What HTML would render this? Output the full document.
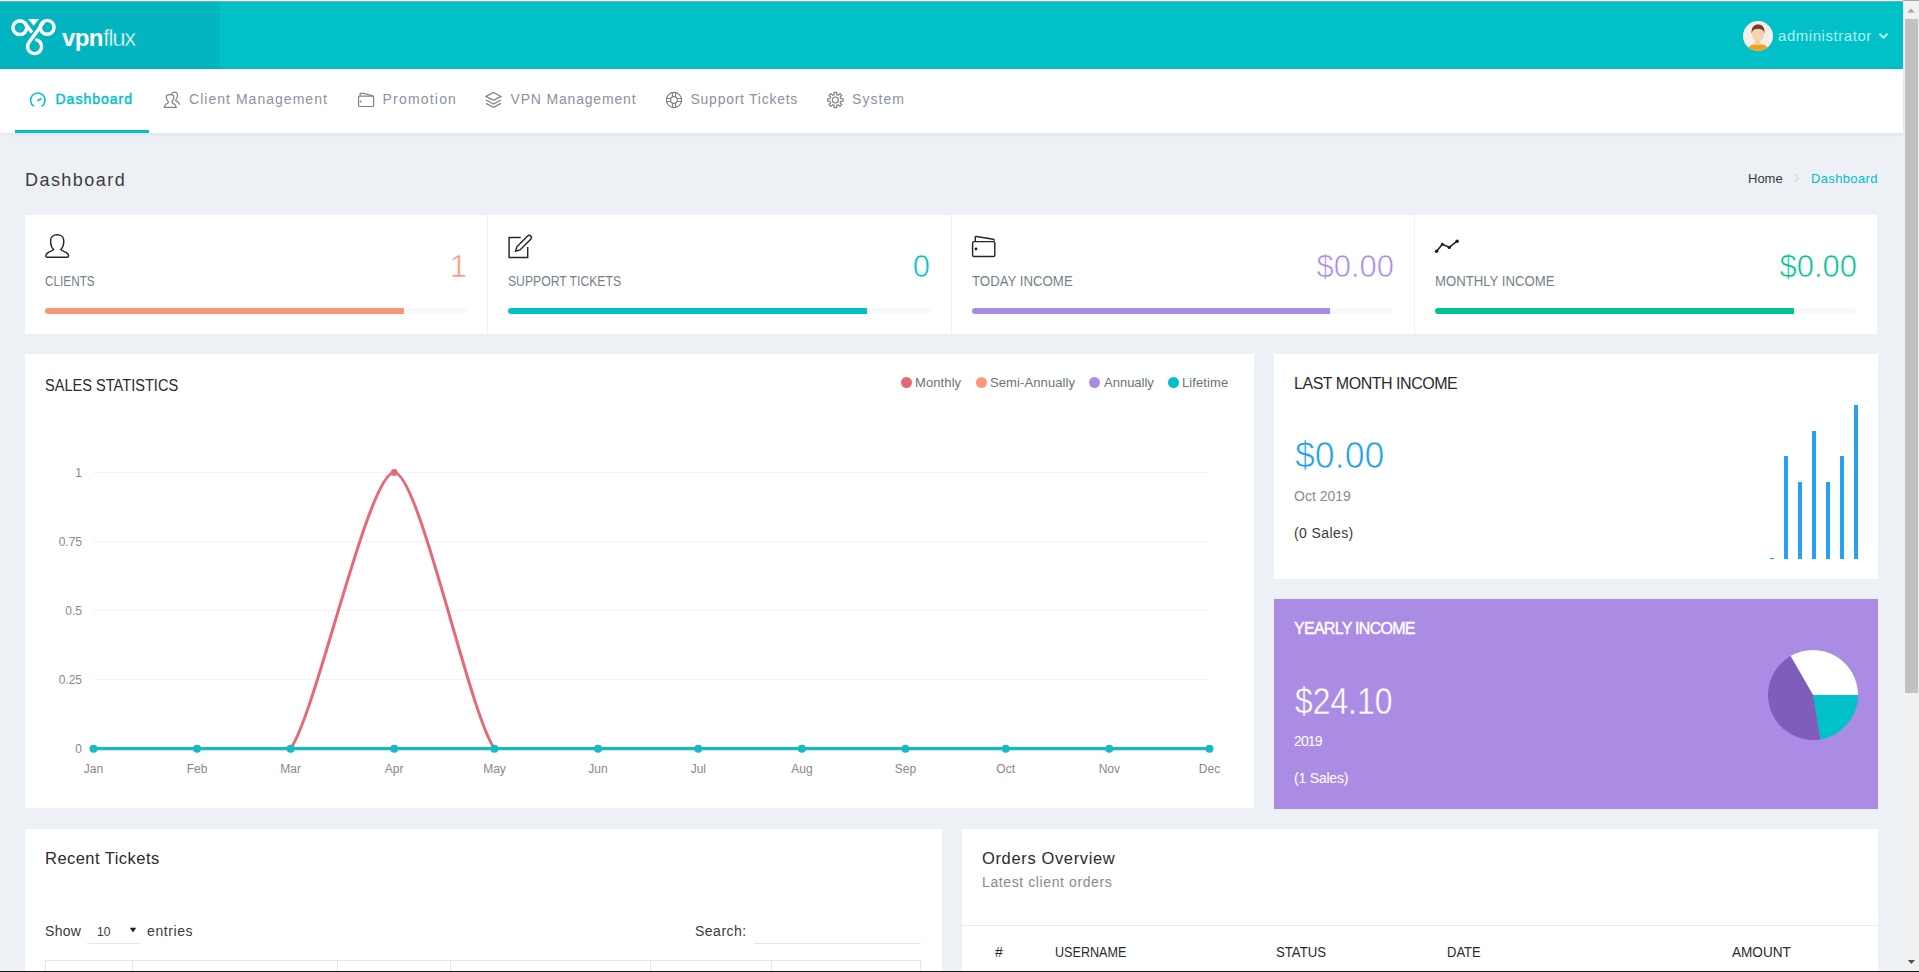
<!DOCTYPE html>
<html><head><meta charset="utf-8">
<style>
*{box-sizing:border-box}
html,body{margin:0;padding:0}
body{width:1919px;height:972px;overflow:hidden;background:#edf1f5;font-family:"Liberation Sans",sans-serif;position:relative;color:#313131}
.a{position:absolute}
.t{position:absolute;white-space:nowrap;line-height:1}
svg{position:absolute;overflow:visible}
</style></head><body>
<!-- top frame line -->
<div class="a" style="left:0;top:0;width:1919px;height:1px;background:#efefef"></div>
<!-- header -->
<div class="a" style="left:0;top:1px;width:1903px;height:68px;background:#01c0c8"></div>
<div class="a" style="left:0;top:1px;width:220px;height:68px;background:#02b5c0"></div>
<div class="a" style="left:0;top:1px;width:1903px;height:1px;background:#6aaeb0"></div>
<!-- logo -->
<svg style="left:0;top:0" width="60" height="60" viewBox="0 0 60 60">
 <g fill="none" stroke="#fff" stroke-width="3.4">
  <circle cx="19.8" cy="27.6" r="6.9"/>
  <circle cx="47.2" cy="27.3" r="6.9"/>
  <path d="M24.6 22.6 L32 32.6"/>
  <path d="M43.6 22.3 L29.1 42.2 A7 7 0 1 0 35.4 39.6"/>
 </g>
 <polygon points="28.2,18.9 39.1,18.9 33.6,25.8" fill="#fff"/>
</svg>
<div class="t" style="left:62px;top:26px;font-size:24px;font-weight:700;color:#fff;letter-spacing:-0.6px">vpn</div>
<div class="t" style="left:103px;top:26px;font-size:24px;color:#fff;-webkit-text-stroke:0.55px #02b5c0;letter-spacing:-1.4px">flux</div>
<!-- avatar -->
<svg style="left:1743px;top:21px" width="30" height="30" viewBox="0 0 30 30">
 <defs><clipPath id="av"><circle cx="15" cy="15" r="15"/></clipPath></defs>
 <g clip-path="url(#av)">
  <rect width="30" height="30" fill="#f4efe9"/>
  <path d="M4 30 C5 24 10 23 15 23 C20 23 25 24 26 30Z" fill="#f0a11e"/>
  <rect x="12.5" y="18" width="5" height="6" fill="#f3c9a0"/>
  <ellipse cx="15" cy="13.5" rx="6" ry="7" fill="#f6d2ad"/>
  <path d="M8.6 13 C8 6 11 3.5 15 3.5 C19.5 3.5 22 6 21.4 13 C20.8 9 19 8 15 8 C11 8 9.5 9 8.6 13Z" fill="#7a3b2a"/>
 </g>
</svg>
<div class="t" style="left:1778px;top:28px;font-size:15px;color:#b3f1f4;letter-spacing:0.55px">administrator</div>
<svg style="left:1878px;top:32px" width="11" height="8" viewBox="0 0 11 8"><path d="M1.5 1.8 L5.5 5.8 L9.5 1.8" fill="none" stroke="#b3f1f4" stroke-width="2.2"/></svg>

<!-- nav -->
<div class="a" style="left:0;top:69px;width:1903px;height:64px;background:#fff;box-shadow:0 1px 5px rgba(0,0,0,0.07)"></div>
<div class="a" style="left:15px;top:130px;width:134px;height:3px;background:#01c0c8"></div>
<!-- nav icons -->
<svg style="left:0;top:0" width="900" height="140" viewBox="0 0 900 140">
 <g fill="none" stroke="#01c0c8" stroke-width="1.5">
  <path d="M34.04 106.46 A7.3 7.3 0 1 1 41.56 106.46"/>
  <path d="M37.3 100.8 L41.6 98.4" stroke-width="1.7"/>
 </g>
 <g fill="none" stroke="#7d828c" stroke-width="1.2">
  <path d="M171 94.6 C171.8 93 173 92.2 174.4 92.2 C176.2 92.2 177.5 93.6 177.5 95.6 C177.5 97 177.2 98.5 175.8 99.8 V100.8 C177.3 101.8 179.6 102.6 179.7 104.8"/>
  <path fill="#fff" d="M164.3 107.3 H176.2 C176.2 104.6 173.6 103.6 172 102.8 V101.4 C173.4 100.1 173.9 98.4 173.9 97.3 C173.9 95.3 172.3 94.6 170.1 94.6 C167.9 94.6 166.3 95.3 166.3 97.3 C166.3 98.4 166.8 100.1 168.2 101.4 V102.8 C166.6 103.6 164.3 104.6 164.3 107.3Z"/>
  <rect x="358.6" y="96.2" width="15" height="10.3" rx="0.8"/>
  <path d="M360.2 96 V93.4 H363.3 C365.5 93.4 366 94.3 368 94.5 L373 95.8"/>
  <path d="M486 96.4 L493.5 92.4 L501 96.4 L493.5 100.4Z"/>
  <path d="M486 100 L493.5 104 L501 100"/>
  <path d="M486 103.4 L493.5 107.4 L501 103.4"/>
  <circle cx="674" cy="100" r="7.6"/>
  <circle cx="674" cy="100" r="3.4"/>
  <path d="M672.5 92.4 V96.8 M675.5 92.4 V96.8 M672.5 103.2 V107.6 M675.5 103.2 V107.6 M666.4 98.5 H670.8 M666.4 101.5 H670.8 M677.2 98.5 H681.6 M677.2 101.5 H681.6"/>
  <circle cx="835.4" cy="100" r="3"/>
 </g>
 <circle cx="360.8" cy="101.5" r="0.9" fill="#7d828c"/>
 <path id="gear" fill="none" stroke="#7d828c" stroke-width="1.2" d="M834.05 94.57 L834.12 92.31 L836.68 92.31 L836.75 94.57 L838.29 95.20 L839.94 93.65 L841.75 95.46 L840.20 97.11 L840.83 98.65 L843.09 98.72 L843.09 101.28 L840.83 101.35 L840.20 102.89 L841.75 104.54 L839.94 106.35 L838.29 104.80 L836.75 105.43 L836.68 107.69 L834.12 107.69 L834.05 105.43 L832.51 104.80 L830.86 106.35 L829.05 104.54 L830.60 102.89 L829.97 101.35 L827.71 101.28 L827.71 98.72 L829.97 98.65 L830.60 97.11 L829.05 95.46 L830.86 93.65 L832.51 95.20Z"/>
</svg>
<div class="t" style="left:55.5px;top:92px;font-size:14px;color:#01c0c8;-webkit-text-stroke:0.45px #01c0c8;letter-spacing:1.0px">Dashboard</div>
<div class="t" style="left:189px;top:92px;font-size:14px;color:#8b92a0;letter-spacing:1.03px">Client Management</div>
<div class="t" style="left:382.5px;top:92px;font-size:14px;color:#8b92a0;letter-spacing:1.2px">Promotion</div>
<div class="t" style="left:510.5px;top:92px;font-size:14px;color:#8b92a0;letter-spacing:0.82px">VPN Management</div>
<div class="t" style="left:690.5px;top:92px;font-size:14px;color:#8b92a0;letter-spacing:0.74px">Support Tickets</div>
<div class="t" style="left:852px;top:92px;font-size:14px;color:#8b92a0;letter-spacing:1.05px">System</div>

<!-- page title -->
<div class="t" style="left:25px;top:171px;font-size:18px;color:#3c3c3c;letter-spacing:1.45px">Dashboard</div>
<div class="t" style="left:1748px;top:172px;font-size:13px;color:#3a3a3a">Home</div>
<svg style="left:1793px;top:173px" width="8" height="10" viewBox="0 0 8 10"><path d="M1.5 1 L5.5 5 L1.5 9" fill="none" stroke="#c9ced6" stroke-width="1"/></svg>
<div class="t" style="left:1811px;top:172px;font-size:13px;color:#01c0c8;letter-spacing:0.35px">Dashboard</div>

<!-- stat cards -->
<div class="a" style="left:25px;top:215px;width:1852px;height:119px;background:#fff"></div>
<div class="a" style="left:487px;top:215px;width:1px;height:119px;background:#eef1f4"></div>
<div class="a" style="left:951px;top:215px;width:1px;height:119px;background:#eef1f4"></div>
<div class="a" style="left:1414px;top:215px;width:1px;height:119px;background:#eef1f4"></div>
<svg style="left:0;top:0" width="1500" height="300" viewBox="0 0 1500 300">
 <g fill="none" stroke="#262626" stroke-width="1.45">
  <path d="M53.6 249.6 C51.6 247.6 50.6 244.5 50.6 241 C50.6 237 53.5 234.8 57.2 234.8 C60.9 234.8 63.8 237 63.8 241 C63.8 244.5 62.8 247.6 60.8 249.6 C61.5 250.6 63.5 251.3 66.2 252.5 C68.2 253.4 68.6 254.6 68.6 256 C68.6 257 68 257.3 67 257.3 H47.4 C46.4 257.3 45.8 257 45.8 256 C45.8 254.6 46.2 253.4 48.2 252.5 C50.9 251.3 52.9 250.6 53.6 249.6Z"/>
  <path d="M520.7 237.4 H509.1 V257.4 H527.7 V247"/>
  <path d="M515.6 251.2 L516.87 246.81 L527.64 236.04 A2.2 2.2 0 0 1 530.76 239.16 L519.99 249.93 Z"/>
  <rect x="972.6" y="241.6" width="22.2" height="14.9" rx="1.3"/>
  <path d="M975.3 241.6 V237.6 Q975.3 236.3 976.6 236.5 L993.2 239.3 Q994.4 239.6 994.4 240.8"/>
 </g>
 <circle cx="976" cy="249" r="1.4" fill="#1f1f1f"/>
 <g fill="none" stroke="#1f1f1f" stroke-width="1.5">
  <path d="M1436.6 251.3 L1442.4 244.25 L1449.3 247.4 L1457.1 241.2"/>
 </g>
 <g fill="#1f1f1f">
  <circle cx="1436.6" cy="251.3" r="1.8"/><circle cx="1442.4" cy="244.25" r="1.5"/><circle cx="1449.3" cy="247.4" r="1.7"/><circle cx="1457.1" cy="241.2" r="1.8"/>
 </g>
</svg>
<div class="t" style="left:45px;top:274px;font-size:14px;color:#757f89;transform-origin:0 0;transform:scaleX(0.84)">CLIENTS</div>
<div class="t" style="left:508px;top:274px;font-size:14px;color:#757f89;transform-origin:0 0;transform:scaleX(0.87)">SUPPORT TICKETS</div>
<div class="t" style="left:972px;top:274px;font-size:14px;color:#757f89;transform-origin:0 0;transform:scaleX(0.945)">TODAY INCOME</div>
<div class="t" style="left:1435px;top:274px;font-size:14px;color:#757f89;transform-origin:0 0;transform:scaleX(0.94)">MONTHLY INCOME</div>
<div class="t" style="left:387px;top:251.3px;width:80px;text-align:right;font-size:31px;color:#fb9678;-webkit-text-stroke:0.6px #fff">1</div>
<div class="t" style="left:850px;top:251.3px;width:80px;text-align:right;font-size:31px;color:#01c0c8;-webkit-text-stroke:0.6px #fff">0</div>
<div class="t" style="left:1234px;top:251.3px;width:160px;text-align:right;font-size:31px;color:#ab8ce4;-webkit-text-stroke:0.6px #fff">$0.00</div>
<div class="t" style="left:1697px;top:251.3px;width:160px;text-align:right;font-size:31px;color:#00c292;-webkit-text-stroke:0.6px #fff">$0.00</div>
<div class="a" style="left:45px;top:308px;width:421px;height:6px;background:#f6f8fa;border-radius:3px"></div>
<div class="a" style="left:45px;top:308px;width:359px;height:6px;background:#fb9678;border-radius:3px 0 0 3px"></div>
<div class="a" style="left:508px;top:308px;width:422px;height:6px;background:#f6f8fa;border-radius:3px"></div>
<div class="a" style="left:508px;top:308px;width:359px;height:6px;background:#01c0c8;border-radius:3px 0 0 3px"></div>
<div class="a" style="left:972px;top:308px;width:421px;height:6px;background:#f6f8fa;border-radius:3px"></div>
<div class="a" style="left:972px;top:308px;width:358px;height:6px;background:#ab8ce4;border-radius:3px 0 0 3px"></div>
<div class="a" style="left:1435px;top:308px;width:421px;height:6px;background:#f6f8fa;border-radius:3px"></div>
<div class="a" style="left:1435px;top:308px;width:359px;height:6px;background:#00c292;border-radius:3px 0 0 3px"></div>

<!-- sales statistics -->
<div class="a" style="left:25px;top:354px;width:1229px;height:454px;background:#fff"></div>
<div class="t" style="left:45px;top:377.5px;font-size:15.6px;color:#2b2b2b;transform-origin:0 0;transform:scaleX(0.935)">SALES STATISTICS</div>
<div class="a" style="left:901px;top:377px;width:11px;height:11px;border-radius:50%;background:#e46a76"></div>
<div class="a" style="left:976px;top:377px;width:11px;height:11px;border-radius:50%;background:#fb9678"></div>
<div class="a" style="left:1089px;top:377px;width:11px;height:11px;border-radius:50%;background:#ab8ce4"></div>
<div class="a" style="left:1168px;top:377px;width:11px;height:11px;border-radius:50%;background:#01c0c8"></div>
<div class="t" style="left:915px;top:376px;font-size:13px;color:#67757c;letter-spacing:0.1px">Monthly</div>
<div class="t" style="left:990px;top:376px;font-size:13px;color:#67757c;letter-spacing:0.1px">Semi-Annually</div>
<div class="t" style="left:1104px;top:376px;font-size:13px;color:#67757c;letter-spacing:0px">Annually</div>
<div class="t" style="left:1182px;top:376px;font-size:13px;color:#67757c;letter-spacing:0.1px">Lifetime</div>
<svg style="left:0;top:0" width="1260" height="800" viewBox="0 0 1260 800">
<g transform="translate(0.5,0)">
 <g stroke="#f1f2f4" stroke-width="1">
  <path d="M93 472.5 H1208.5 M93 541.5 H1208.5 M93 610.5 H1208.5 M93 679.5 H1208.5"/>
 </g>
 <g font-family="Liberation Sans" font-size="12" fill="#888" text-anchor="end">
  <text x="81.5" y="477">1</text>
  <text x="81.5" y="546">0.75</text>
  <text x="81.5" y="615">0.5</text>
  <text x="81.5" y="684">0.25</text>
  <text x="81.5" y="753">0</text>
 </g>
 <g font-family="Liberation Sans" font-size="12" fill="#888" text-anchor="middle">
  <text x="93" y="773">Jan</text><text x="196.6" y="773">Feb</text><text x="290.1" y="773">Mar</text><text x="393.7" y="773">Apr</text>
  <text x="494" y="773">May</text><text x="597.5" y="773">Jun</text><text x="697.8" y="773">Jul</text><text x="801.4" y="773">Aug</text>
  <text x="904.9" y="773">Sep</text><text x="1005.2" y="773">Oct</text><text x="1108.8" y="773">Nov</text><text x="1209" y="773">Dec</text>
 </g>
 <path fill="none" stroke="#e46a76" stroke-width="3" d="M93.00,748.50C118.90,748.50,170.69,748.50,196.58,748.50C219.97,748.50,266.75,748.50,290.14,748.50C316.03,712.25,367.82,472.50,393.72,472.50C418.78,472.50,468.90,714.57,493.96,748.50C519.85,748.50,571.64,748.50,597.54,748.50"/>
 <circle cx="393.72" cy="472.5" r="3.4" fill="#e46a76"/>
 <path fill="none" stroke="#16b9c6" stroke-width="3.2" d="M93 748.7 H1209"/>
 <g fill="#16b9c6">
  <circle cx="93" cy="748.7" r="4"/><circle cx="196.58" cy="748.7" r="4"/><circle cx="290.14" cy="748.7" r="4"/><circle cx="393.72" cy="748.7" r="4"/>
  <circle cx="493.96" cy="748.7" r="4"/><circle cx="597.54" cy="748.7" r="4"/><circle cx="697.78" cy="748.7" r="4"/><circle cx="801.36" cy="748.7" r="4"/>
  <circle cx="904.94" cy="748.7" r="4"/><circle cx="1005.18" cy="748.7" r="4"/><circle cx="1108.76" cy="748.7" r="4"/><circle cx="1209" cy="748.7" r="4"/>
 </g>
</g>
</svg>

<!-- last month income -->
<div class="a" style="left:1274px;top:354px;width:604px;height:225px;background:#fff"></div>
<div class="t" style="left:1294px;top:376px;font-size:16px;color:#2b2b2b;letter-spacing:-0.47px">LAST MONTH INCOME</div>
<div class="t" style="left:1295px;top:437px;font-size:37px;color:#1e9fe8;-webkit-text-stroke:0.7px #fff;transform-origin:0 0;transform:scaleX(0.965)">$0.00</div>
<div class="t" style="left:1294px;top:489px;font-size:14px;color:#8b8b8b">Oct 2019</div>
<div class="t" style="left:1294px;top:526px;font-size:14px;color:#3a3a3a;letter-spacing:0.4px">(0 Sales)</div>
<div class="a" style="left:1770px;top:558px;width:4px;height:1px;background:#03a9f3"></div>
<div class="a" style="left:1784px;top:456px;width:4px;height:103px;background:#26a0f0"></div>
<div class="a" style="left:1798px;top:482px;width:4px;height:77px;background:#26a0f0"></div>
<div class="a" style="left:1812px;top:431px;width:4px;height:128px;background:#26a0f0"></div>
<div class="a" style="left:1826px;top:482px;width:4px;height:77px;background:#26a0f0"></div>
<div class="a" style="left:1840px;top:456px;width:4px;height:103px;background:#26a0f0"></div>
<div class="a" style="left:1854px;top:405px;width:4px;height:154px;background:#26a0f0"></div>

<!-- yearly income -->
<div class="a" style="left:1274px;top:599px;width:604px;height:210px;background:#ab8ce4"></div>
<div class="t" style="left:1294px;top:620.5px;font-size:16px;color:#fff;-webkit-text-stroke:0.4px #fff;letter-spacing:-0.72px">YEARLY INCOME</div>
<div class="t" style="left:1295px;top:682.5px;font-size:37px;color:#fff;-webkit-text-stroke:0.45px #ab8ce4;transform-origin:0 0;transform:scaleX(0.86)">$24.10</div>
<div class="t" style="left:1294px;top:734px;font-size:14px;color:#fff;letter-spacing:-0.9px">2019</div>
<div class="t" style="left:1294px;top:771px;font-size:14px;color:#fff;letter-spacing:-0.2px">(1 Sales)</div>
<svg style="left:0;top:0" width="1900" height="800" viewBox="0 0 1900 800">
 <path d="M1813 695 L1790.5 656.03 A45 45 0 0 1 1858 695Z" fill="#fff"/>
 <path d="M1813 695 L1858 695 A45 45 0 0 1 1820.35 739.4Z" fill="#01c0c8"/>
 <path d="M1813 695 L1820.35 739.4 A45 45 0 0 1 1790.5 656.03Z" fill="#7f5dbb"/>
</svg>

<!-- recent tickets -->
<div class="a" style="left:25px;top:829px;width:917px;height:160px;background:#fff"></div>
<div class="t" style="left:45px;top:850.3px;font-size:16.5px;color:#2b2b2b;letter-spacing:0.46px">Recent Tickets</div>
<div class="t" style="left:45px;top:924px;font-size:14px;color:#3a3a3a;letter-spacing:0.3px">Show</div>
<div class="t" style="left:97px;top:926px;font-size:12px;color:#3a3a3a">10</div>
<svg style="left:129px;top:927px" width="8" height="6" viewBox="0 0 8 6"><path d="M0.8 0.8 H7.2 L4 5.6Z" fill="#222"/></svg>
<div class="a" style="left:87px;top:943px;width:54px;height:1px;background:#e6e6e6"></div>
<div class="t" style="left:147px;top:924px;font-size:14px;color:#3a3a3a;letter-spacing:0.6px">entries</div>
<div class="t" style="left:695px;top:924px;font-size:14px;color:#3a3a3a;letter-spacing:0.5px">Search:</div>
<div class="a" style="left:754px;top:943px;width:167px;height:1px;background:#e6e6e6"></div>
<div class="a" style="left:45px;top:960px;width:876px;height:20px;border:1px solid #e3e6ea;border-bottom:none"></div>
<div class="a" style="left:132px;top:960px;width:1px;height:20px;background:#e3e6ea"></div>
<div class="a" style="left:337px;top:960px;width:1px;height:20px;background:#e3e6ea"></div>
<div class="a" style="left:450px;top:960px;width:1px;height:20px;background:#e3e6ea"></div>
<div class="a" style="left:650px;top:960px;width:1px;height:20px;background:#e3e6ea"></div>
<div class="a" style="left:771px;top:960px;width:1px;height:20px;background:#e3e6ea"></div>

<!-- orders overview -->
<div class="a" style="left:962px;top:829px;width:916px;height:160px;background:#fff"></div>
<div class="t" style="left:982px;top:850.3px;font-size:16.5px;color:#2b2b2b;letter-spacing:0.64px">Orders Overview</div>
<div class="t" style="left:982px;top:875px;font-size:14px;color:#8b8b8b;letter-spacing:0.6px">Latest client orders</div>
<div class="a" style="left:962px;top:925px;width:916px;height:1px;background:#e9ecef"></div>
<div class="t" style="left:995px;top:945px;font-size:14px;color:#2b2b2b">#</div>
<div class="t" style="left:1055px;top:945px;font-size:14px;color:#2b2b2b;transform-origin:0 0;transform:scaleX(0.9)">USERNAME</div>
<div class="t" style="left:1276px;top:945px;font-size:14px;color:#2b2b2b;transform-origin:0 0;transform:scaleX(0.94)">STATUS</div>
<div class="t" style="left:1447px;top:945px;font-size:14px;color:#2b2b2b;transform-origin:0 0;transform:scaleX(0.93)">DATE</div>
<div class="t" style="left:1732px;top:945px;font-size:14px;color:#2b2b2b;transform-origin:0 0;transform:scaleX(0.97)">AMOUNT</div>

<!-- bottom dark line -->
<div class="a" style="left:0;top:971px;width:1919px;height:1px;background:#1a1a1a"></div>

<!-- scrollbar -->
<div class="a" style="left:1904px;top:0;width:15px;height:971px;background:#f1f1f1"></div>
<div class="a" style="left:1903px;top:0;width:16px;height:1px;background:#a3a3a3"></div>
<div class="a" style="left:1905px;top:19px;width:13px;height:674px;background:#c1c1c1"></div>
<svg style="left:1903px;top:0" width="16" height="971" viewBox="0 0 16 971">
 <path d="M4.5 12.5 H11.5 L8 8.5Z" fill="#a3a3a3"/>
 <path d="M4.8 960 H12 L8.4 964Z" fill="#505050"/>
</svg>
</body></html>
